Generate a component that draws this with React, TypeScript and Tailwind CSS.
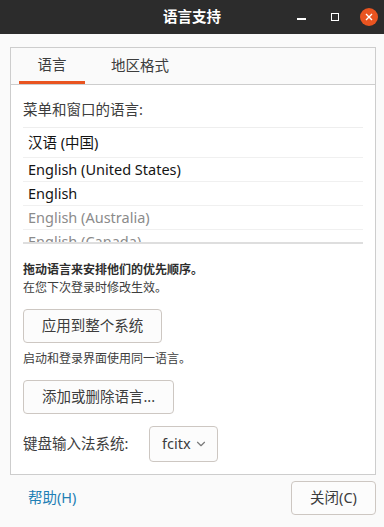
import { ChevronDown } from "lucide-react";

const FONT = { fontFamily: '"Noto Sans", "Noto Sans CJK SC", sans-serif' };

const LANGS = [
  { name: "汉语 (中国)", active: true, tall: true },
  { name: "English (United States)", active: true },
  { name: "English", active: true },
  { name: "English (Australia)", active: false },
  { name: "English (Canada)", active: false },
];

function TitleBar() {
  return (
    <div className="relative h-[34px] bg-[#2c2c2c] flex items-center justify-center">
      <span className="text-white font-bold text-[14.5px]">语言支持</span>
      <div className="absolute right-0 top-0 h-[34px] flex items-center">
        <div className="w-[34px] flex justify-center">
          <div className="w-[9px] h-[1.5px] bg-white mt-[4px]" />
        </div>
        <div className="w-[34px] flex justify-center">
          <div className="w-[8px] h-[8px] border border-white" />
        </div>
        <div className="w-[34px] flex justify-center mr-[-2px]">
          <div className="w-[18px] h-[18px] rounded-full bg-[#e95420] flex items-center justify-center">
            <svg width="8" height="8" viewBox="0 0 8 8">
              <path d="M1 1 L7 7 M7 1 L1 7" stroke="white" strokeWidth="1.4" />
            </svg>
          </div>
        </div>
      </div>
    </div>
  );
}

function Button({ children, className }: { children: React.ReactNode; className?: string }) {
  return (
    <div
      className={
        "h-[34px] border border-[#cdc7c2] rounded-[4px] bg-[#fcfcfc] flex items-center justify-center text-[14.5px] text-[#3d3d3d] " +
        (className || "")
      }
    >
      {children}
    </div>
  );
}

export default function App() {
  return (
    <div style={FONT} className="w-[384px] h-[527px] bg-[#fafafa] flex flex-col overflow-hidden">
      <TitleBar />

      <div className="ml-[10px] mt-[13px] w-[366px] h-[428px] border border-[#cdcdcd] flex flex-col">
        {/* tabs */}
        <div className="h-[37px] flex gap-[8px] pl-[8px] border-b border-[#cdcdcd] bg-[#fafafa]">
          <div className="w-[66px] flex flex-col">
            <div className="flex-1 flex items-center justify-center text-[14.5px] text-[#3d3d3d]">语言</div>
            <div className="h-[3px] bg-[#e95420]" />
          </div>
          <div className="px-[18px] flex items-center text-[14.5px] text-[#3d3d3d]">地区格式</div>
        </div>

        {/* page */}
        <div className="flex-1 bg-white px-[12px] flex flex-col">
          <div className="mt-[15px] h-[20px] flex items-center text-[14.5px] text-[#3d3d3d]">菜单和窗口的语言:</div>

          <div className="mt-[7px] w-[340px] h-[117px] border-t border-[#eeeeee] overflow-hidden border-b-2 border-b-[#dedede]">
            {LANGS.map(l => (
              <div
                key={l.name}
                className={
                  (l.tall ? "h-[30px] " : "h-[24px] ") +
                  "flex items-center pl-[5px] border-b border-[#f0f0f0] text-[14.5px] " +
                  (l.active ? "text-[#141414]" : "text-[#8b8b8b]")
                }
              >
                {l.name}
              </div>
            ))}
          </div>

          <div className="mt-[17px] text-[12px] font-bold text-[#2e2e2e] leading-[18px]">拖动语言来安排他们的优先顺序。</div>
          <div className="text-[12px] text-[#3d3d3d] leading-[18px]">在您下次登录时修改生效。</div>

          <Button className="mt-[12px] w-[139px]">应用到整个系统</Button>

          <div className="mt-[7px] text-[12px] text-[#3d3d3d] leading-[18px]">启动和登录界面使用同一语言。</div>

          <Button className="mt-[12px] w-[151px]">添加或删除语言...</Button>

          <div className="mt-[12px] flex items-center">
            <span className="text-[14.5px] text-[#3d3d3d] w-[126px]">键盘输入法系统:</span>
            <div className="h-[36px] w-[69px] border border-[#cdc7c2] rounded-[4px] bg-[#fcfcfc] flex items-center pl-[12px] gap-[3px] text-[14.5px] text-[#3d3d3d]">
              fcitx
              <ChevronDown size={14} strokeWidth={2} className="text-[#7a7a7a]" />
            </div>
          </div>
        </div>
      </div>

      <div className="mt-[6px] ml-[28px] mr-[8px] flex items-center justify-between">
        <span className="text-[14.5px] text-[#1f7fb5]">帮助(H)</span>
        <Button className="w-[85px]">关闭(C)</Button>
      </div>
    </div>
  );
}
